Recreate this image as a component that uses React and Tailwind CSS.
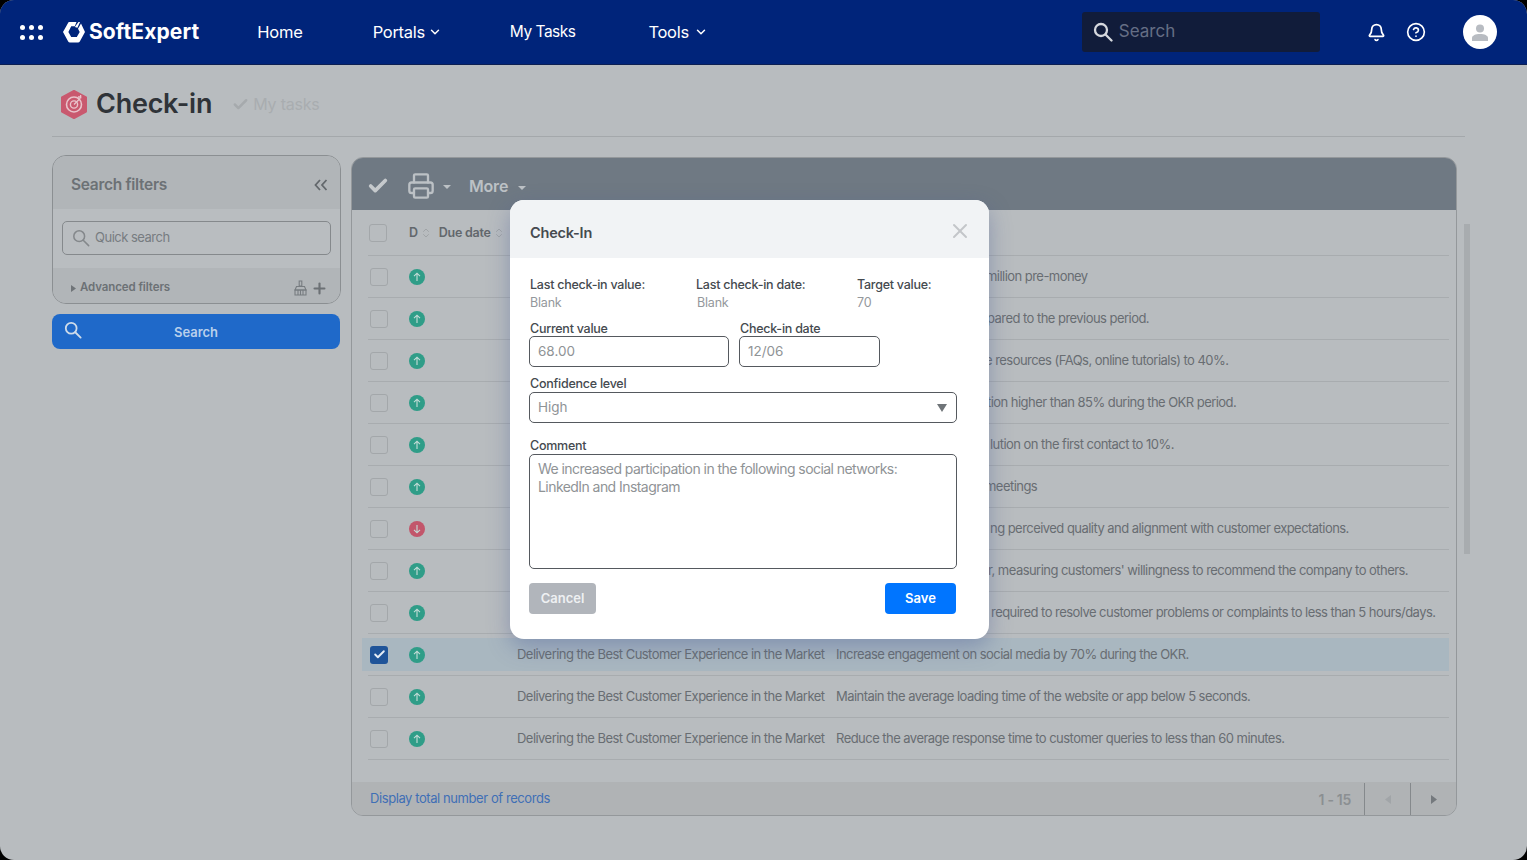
import React from "react";
import { Bell, Check, ChevronDown, ChevronsUpDown, CircleHelp, Plus, Printer, X } from "lucide-react";

const FONT = "font-['Inter','Noto_Sans',sans-serif]";

const ROWS = [
  { tail: "million pre-money", offset: "ml-[561px]" },
  { tail: "pared to the previous period.", offset: "ml-[562px]" },
  { tail: "e resources (FAQs, online tutorials) to 40%.", offset: "ml-[560px]" },
  { tail: "tion higher than 85% during the OKR period.", offset: "ml-[562px]" },
  { tail: "lution on the first contact to 10%.", offset: "ml-[565px]" },
  { tail: "meetings", offset: "ml-[560px]" },
  { tail: "ng perceived quality and alignment with customer expectations.", down: true, offset: "ml-[565px]" },
  { tail: "r, measuring customers' willingness to recommend the company to others.", offset: "ml-[563px]" },
  { tail: "required to resolve customer problems or complaints to less than 5 hours/days.", offset: "ml-[566px]" },
  { goal: "Delivering the Best Customer Experience in the Market", text: "Increase engagement on social media by 70% during the OKR.", selected: true },
  { goal: "Delivering the Best Customer Experience in the Market", text: "Maintain the average loading time of the website or app below 5 seconds." },
  { goal: "Delivering the Best Customer Experience in the Market", text: "Reduce the average response time to customer queries to less than 60 minutes." },
];

function Logo() {
  return (
    <svg width="24" height="22" viewBox="0 0 24 22" fill="none">
      <path d="M7 1h7.500L12.800 5.200H9.200L6.400 11l2.800 5h5.600l2.900-5-1.700-3.200L19 2.500 23 11l-5.200 9.500a2 2 0 0 1-1.700 1H7.900a2 2 0 0 1-1.700-1L1 11l5.200-9.200A1.600 1.600 0 0 1 7 1z" fill="#fff" />
      <path d="M12.800 6 16.500 1h1.500l-2.600 5.700z" fill="#fff" />
    </svg>
  );
}

function SearchGlyph({ size, color, width = 2 }) {
  return (
    <svg width={size} height={size} viewBox="0 0 20 20" fill="none" stroke={color} strokeWidth={width} strokeLinecap="round">
      <circle cx="8" cy="8" r="6" />
      <path d="M12.500 12.500 18.500 18.500" />
    </svg>
  );
}

function TargetIcon() {
  return (
    <svg width="28" height="29" viewBox="0 0 28 29" fill="none">
      <path d="M14 1l12 6.500v14L14 28 2 21.500v-14z" fill="#c9596f" stroke="#c9596f" strokeWidth="2" strokeLinejoin="round" />
      <circle cx="14" cy="14.500" r="7.500" stroke="#e9c3cb" strokeWidth="1.600" />
      <circle cx="14" cy="14.500" r="3.600" stroke="#e9c3cb" strokeWidth="1.400" />
      <path d="M14 14.500l6-6M18 7h3.400M20.600 5v3.400" stroke="#e9c3cb" strokeWidth="1.300" />
    </svg>
  );
}

function Broom() {
  return (
    <svg width="15" height="16" viewBox="0 0 15 16" fill="none" stroke="#777c80" strokeWidth="1.100">
      <path d="M6.200 1h2.600v5H6.200z" />
      <path d="M3.500 6.500h8l1.500 3.500H2z" />
      <path d="M2 10h11v5H2zM5 10.500V15M7.500 10.500V15M10 10.500V15" />
    </svg>
  );
}

function Status({ down }) {
  return (
    <div className={`flex h-4 w-4 shrink-0 items-center justify-center rounded-full ${down ? "bg-[#c2566b]" : "bg-[#2f9d88]"}`}>
      <svg width="10" height="10" viewBox="0 0 10 10" fill="none" stroke="#c5dcd8" strokeWidth="1.100" className={down ? "rotate-180" : ""}>
        <path d="M5 9V1.500M2 4.200 5 1.200l3 3" />
      </svg>
    </div>
  );
}

function Checkbox({ checked }) {
  if (checked) {
    return (
      <div className="flex h-[18px] w-[18px] shrink-0 items-center justify-center rounded-[3px] bg-[#1f5499]">
        <Check size={13} strokeWidth={3.5} color="#e6edf5" />
      </div>
    );
  }
  return <div className="h-[18px] w-[18px] shrink-0 rounded-[3px] border border-[#a3a7aa]" />;
}

function Row({ row }) {
  return (
    <div className="h-[42px] border-b border-[#a8acaf] py-[4px]">
      <div className={`-ml-[6px] flex h-full items-center pl-[8px] text-[13px] tracking-[-0.54px] text-[#686d72] ${row.selected ? "bg-[#a9b7c0]" : ""}`}>
        <Checkbox checked={row.selected} />
        <div className="ml-[21px]"><Status down={row.down} /></div>
        {row.tail ? (
          <div className={`${row.offset} whitespace-nowrap`}>{row.tail}</div>
        ) : (
          <>
            <div className="ml-[92px] w-[319px] whitespace-nowrap">{row.goal}</div>
            <div className="whitespace-nowrap">{row.text}</div>
          </>
        )}
      </div>
    </div>
  );
}

function Sidebar() {
  return (
    <div className="w-[288px] shrink-0">
      <div className="h-[149px] w-[289px] overflow-hidden rounded-[14px] border border-[#8b8f92]">
        <div className="flex h-[53px] items-center justify-between bg-[#b1b5b8] pl-[18px] pr-[12px] pt-[5px]">
          <span className="text-[15.5px] font-semibold tracking-[-0.3px] text-[#6c7175]">Search filters</span>
          <svg width="14" height="12" viewBox="0 0 14 12" fill="none" stroke="#63686c" strokeWidth="1.800">
            <path d="M6 1 1.500 6 6 11M12.500 1 8 6l4.500 5" />
          </svg>
        </div>
        <div className="h-[59px] bg-[#b9bdc0] px-[9px] pt-[12px]">
          <div className="flex h-[34px] items-center rounded-[5px] border border-[#85898c] pl-[9px]">
            <SearchGlyph size={18} color="#84888b" width={1.7} />
            <span className="ml-[5px] text-[13px] tracking-[-0.5px] text-[#777c80]">Quick search</span>
          </div>
        </div>
        <div className="flex h-[35px] items-center bg-[#b1b5b8] pl-[18px] pr-[12px] pt-[5px]">
          <svg width="5" height="7" viewBox="0 0 5 7" fill="#6f7478"><path d="M0 0l5 3.500L0 7z" /></svg>
          <span className="ml-[4px] text-[11.5px] font-semibold tracking-[-0.1px] text-[#6c7175]">Advanced filters</span>
          <div className="ml-auto flex items-center gap-[3px]">
            <Broom />
            <Plus size={17} strokeWidth={3} color="#6c7175" />
          </div>
        </div>
      </div>
      <div className="relative mt-[10px] flex h-[35px] items-center justify-center rounded-[8px] bg-[#1f69c9] pt-[3px] text-[13px] font-semibold text-[#b9d0ec]">
        <div className="absolute left-[12px] top-[7px]"><SearchGlyph size={18} color="#cfdcea" /></div>
        Search
      </div>
    </div>
  );
}

function TablePanel() {
  return (
    <div className="mt-[2px] flex h-[659px] w-[1106px] shrink-0 flex-col overflow-hidden rounded-[12px] border border-[#94989b]">
      <div className="flex h-[52px] shrink-0 items-center bg-[#6f7983] pl-[15px] pt-[4px]">
        <Check size={22} strokeWidth={4} color="#c5c9cc" />
        <Printer size={28} strokeWidth={2} color="#bcc1c5" className="ml-[18px]" />
        <svg width="8" height="4" viewBox="0 0 8 4" fill="#bcc1c5" className="ml-[8px] mt-[2px]"><path d="M0 0h8L4 4z" /></svg>
        <span className="ml-[18px] text-[16px] font-semibold tracking-[-0.2px] text-[#bcc1c5]">More</span>
        <svg width="8" height="4" viewBox="0 0 8 4" fill="#bcc1c5" className="ml-[10px] mt-[4px]"><path d="M0 0h8L4 4z" /></svg>
      </div>
      <div className="flex-1 pl-[16px] pr-[7px]">
        <div className="flex h-[46px] items-center border-b border-[#a8acaf] pl-[1px] pt-[1px] text-[12.5px] font-semibold tracking-[-0.25px] text-[#62676c]">
          <Checkbox />
          <span className="ml-[22px]">D</span>
          <ChevronsUpDown size={12} color="#a0a4a7" className="ml-[2px]" />
          <span className="ml-[7px]">Due date</span>
          <ChevronsUpDown size={12} color="#a0a4a7" className="ml-[2px]" />
        </div>
        {ROWS.map((row, i) => <Row key={i} row={row} />)}
      </div>
      <div className="flex h-[33px] shrink-0 items-center bg-[#b0b3b5] pl-[18px] pt-[1px]">
        <span className="text-[13px] tracking-[-0.42px] text-[#3f6fb5]">Display total number of records</span>
        <span className="ml-auto mr-[13px] text-[14px] font-semibold tracking-[-0.3px] text-[#8b8f92]">1 - 15</span>
        <div className="flex h-full w-[46px] items-center justify-center border-l border-[#85898c]">
          <svg width="6" height="9" viewBox="0 0 6 9" fill="#a1a5a8"><path d="M6 0v9L0 4.500z" /></svg>
        </div>
        <div className="flex h-full w-[46px] items-center justify-center border-l border-[#85898c]">
          <svg width="6" height="9" viewBox="0 0 6 9" fill="#74797d"><path d="M0 0v9l6-4.500z" /></svg>
        </div>
      </div>
    </div>
  );
}

function Info({ label, value, className, valueClass = "" }) {
  return (
    <div className={className}>
      <div className="text-[12.5px] font-medium leading-[18px] tracking-[-0.25px] text-[#454a4f]">{label}</div>
      <div className={`text-[12.5px] leading-[18px] tracking-[-0.2px] text-[#94989c] ${valueClass}`}>{value}</div>
    </div>
  );
}

function Field({ label, value, className }) {
  return (
    <div className={className}>
      <div className="pl-[1px] text-[12.5px] font-medium leading-[15px] tracking-[-0.25px] text-[#454a4f]">{label}</div>
      <input
        readOnly
        value={value}
        className="h-[31px] w-full rounded-[5px] border border-[#55595e] pb-[2px] pl-[8px] text-[13.5px] text-[#8f9396] outline-none"
      />
    </div>
  );
}

function Modal() {
  return (
    <div className="absolute left-[510px] top-[200px] h-[439px] w-[479px] overflow-hidden rounded-[14px] bg-white shadow-[0_8px_22px_rgba(70,90,150,0.4)]">
      <div className="flex h-[58px] items-center justify-between bg-[#f1f3f5] pl-[20px] pr-[17px] pt-[8px]">
        <span className="text-[14.5px] font-semibold tracking-[-0.2px] text-[#454a4f]">Check-In</span>
        <X size={24} strokeWidth={2} color="#c3c6c9" className="-mt-[5px]" />
      </div>
      <div className="px-[19px]">
        <div className="flex pl-[1px] pt-[18px]">
          <Info label="Last check-in value:" value="Blank" className="w-[166px]" />
          <Info label="Last check-in date:" value="Blank" className="w-[161px]" valueClass="pl-[1px]" />
          <Info label="Target value:" value="70" />
        </div>
        <div className="mt-[9px] flex gap-[10px]">
          <Field label="Current value" value="68.00" className="w-[200px]" />
          <Field label="Check-in date" value="12/06" className="w-[141px]" />
        </div>
        <div className="mt-[9px] w-[428px]">
          <div className="pl-[1px] text-[12.5px] font-medium leading-[16px] tracking-[-0.25px] text-[#454a4f]">Confidence level</div>
          <div className="flex h-[31px] items-center justify-between rounded-[5px] border border-[#55595e] pl-[8px] pr-[9px] text-[13.5px] text-[#8f9396]">
            High
            <svg width="10" height="8" viewBox="0 0 10 8" fill="#6f7478"><path d="M0 0h10L5 8z" /></svg>
          </div>
        </div>
        <div className="mt-[14px] w-[428px]">
          <div className="pl-[1px] text-[12.5px] font-medium leading-[17px] tracking-[-0.25px] text-[#454a4f]">Comment</div>
          <textarea
            readOnly
            value={"We increased participation in the following social networks:\nLinkedIn and Instagram"}
            className="block h-[115px] w-full resize-none rounded-[5px] border border-[#55595e] px-[8px] py-[5px] text-[14px] leading-[18px] tracking-[-0.56px] text-[#8f9396] outline-none"
          />
        </div>
        <div className="mt-[14px] flex w-[427px] items-center justify-between">
          <button className="h-[31px] w-[67px] rounded-[4px] bg-[#b1b5bb] text-[13px] font-semibold text-[#eef0f2]">Cancel</button>
          <button className="h-[31px] w-[71px] rounded-[4px] bg-[#0075ff] text-[13px] font-semibold text-white">Save</button>
        </div>
      </div>
    </div>
  );
}

export default function App() {
  return (
    <div className={`h-[860px] w-[1527px] overflow-hidden bg-black ${FONT}`}>
      <div className="relative flex h-full flex-col overflow-hidden rounded-[14px] bg-[#b8bcbf]">
        <header className="flex h-[65px] shrink-0 items-center border-b border-[#0c1f52] bg-[#00247a] text-white">
          <div className="ml-[20px] grid grid-cols-3 gap-x-[4px] gap-y-[5px]">
            {[0, 1, 2, 3, 4, 5].map((i) => <div key={i} className="h-[5px] w-[5px] rounded-full bg-white" />)}
          </div>
          <div className="ml-[19px] flex items-center">
            <Logo />
            <span className="ml-[3px] text-[21px] font-bold tracking-[0.1px]">SoftExpert</span>
          </div>
          <span className="ml-[58px] text-[16.5px] tracking-[-0.2px]">Home</span>
          <div className="ml-[70px] flex items-center">
            <span className="text-[16.5px] tracking-[-0.3px]">Portals</span>
            <ChevronDown size={14} strokeWidth={2.5} className="ml-[3px]" />
          </div>
          <span className="ml-[68px] text-[15.5px] tracking-[-0.5px]">My Tasks</span>
          <div className="ml-[73px] flex items-center">
            <span className="text-[16.5px] tracking-[-0.3px]">Tools</span>
            <ChevronDown size={14} strokeWidth={2.5} className="ml-[5px]" />
          </div>
          <div className="ml-[374px] flex h-[40px] w-[238px] items-center rounded-[3px] bg-[#111c3a] pl-[11px]">
            <SearchGlyph size={20} color="#d5d8de" width={2.3} />
            <span className="ml-[6px] text-[17px] text-[#656e85]">Search</span>
          </div>
          <Bell size={19} strokeWidth={2.2} className="ml-[47px]" />
          <CircleHelp size={20} strokeWidth={2} className="ml-[20px]" />
          <div className="ml-[37px] flex h-[34px] w-[34px] items-center justify-center rounded-full bg-white">
            <svg width="18" height="17" viewBox="0 0 18 17" fill="#b8bcc2">
              <circle cx="9" cy="4.500" r="4" />
              <path d="M1 17v-3c0-2.500 3.500-4 8-4s8 1.500 8 4v3z" />
            </svg>
          </div>
        </header>

        <div className="ml-[60px] mr-[62px] flex h-[72px] shrink-0 items-center">
          <div className="mt-[7px]"><TargetIcon /></div>
          <span className="ml-[8px] mt-[6px] text-[27px] font-semibold tracking-[-0.25px] text-[#2f3338]">Check-in</span>
          <Check size={17} strokeWidth={3.5} color="#a6aaad" className="ml-[20px] mt-[6px]" />
          <span className="ml-[4px] mt-[6px] text-[16px] tracking-[-0.2px] text-[#a9adb0]">My tasks</span>
        </div>
        <div className="-mt-[1px] ml-[52px] mr-[62px] h-px shrink-0 bg-[#a4a8ab]" />

        <div className="flex flex-1 pl-[52px] pt-[18px]">
          <Sidebar />
          <div className="ml-[11px] flex">
            <TablePanel />
            <div className="ml-[7px] mt-[69px] h-[330px] w-[6px] bg-[#a8acaf]" />
          </div>
        </div>

        <Modal />
      </div>
    </div>
  );
}
